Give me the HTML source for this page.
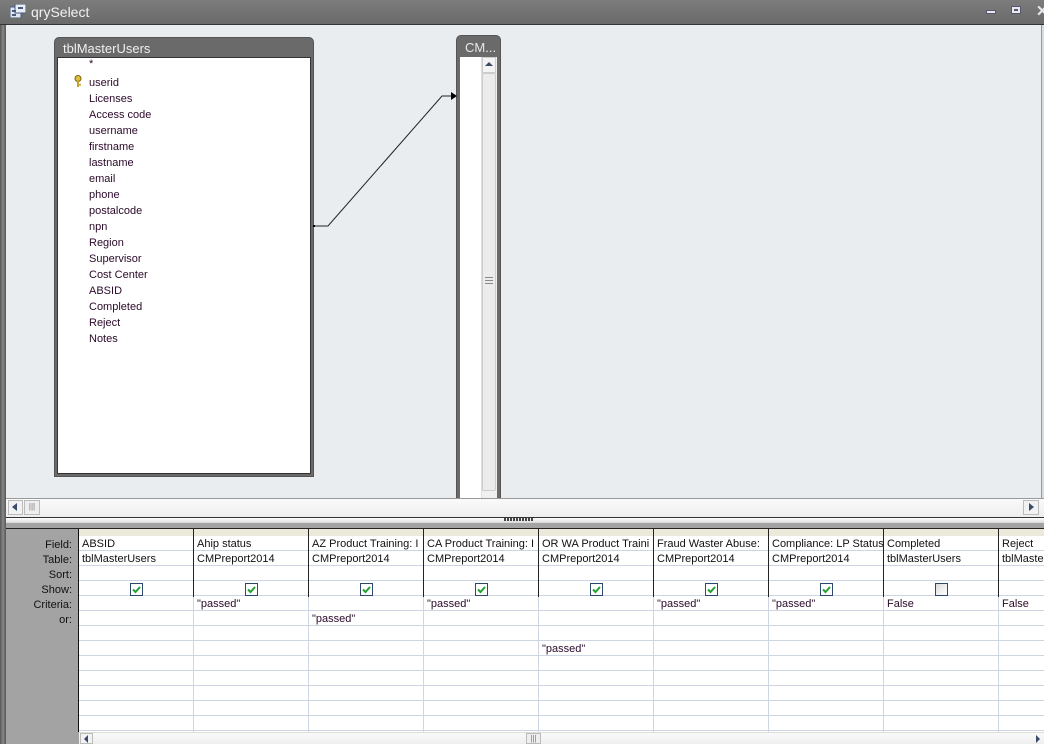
<!DOCTYPE html>
<html><head><meta charset="utf-8"><style>
*{margin:0;padding:0;box-sizing:border-box}
body{width:1044px;height:744px;overflow:hidden;position:relative;background:#e9edf0;font-family:"Liberation Sans",sans-serif;font-size:11px}
.a{position:absolute}
.t{color:#2a0a2a;white-space:nowrap;overflow:hidden}
</style></head><body>
<div class="a" style="left:0;top:0;width:1044px;height:25px;background:linear-gradient(#7c7c7c,#6a6a6a);border-bottom:1px solid #333"></div>
<svg class="a" style="left:10px;top:4px" width="16" height="14"><rect x="0" y="3" width="11" height="11" fill="#dfe6f0" stroke="#4a5a7a"/><rect x="5" y="0" width="11" height="9" fill="#e8eef6" stroke="#4a5a7a"/><rect x="2" y="6" width="4" height="2" fill="#4a5a7a"/><rect x="2" y="10" width="4" height="2" fill="#4a5a7a"/><rect x="8" y="3" width="5" height="2" fill="#4a5a7a"/></svg>
<div class="a" style="left:31px;top:4px;color:#f2f2f2;font-size:14px">qrySelect</div>
<div class="a" style="left:986px;top:10px;width:10px;height:4px;background:#e8e8ee;border:1px solid #555870"></div>
<div class="a" style="left:1011px;top:6px;width:10px;height:8px;background:#e8e8ee;border:1px solid #555870"><div style="margin:2px;height:2px;background:#555870"></div></div>
<div class="a" style="left:1036px;top:2px;color:#e8e8ee;font-size:15px;font-weight:bold">✕</div>
<div class="a" style="left:0;top:25px;width:6px;height:719px;background:linear-gradient(90deg,#555,#888,#555)"></div>
<div class="a" style="left:1041px;top:25px;width:3px;height:473px;background:#d8dce0;border-left:1px solid #999"></div>

<div class="a" style="left:54px;top:37px;width:260px;height:440px;background:#6a6a6a;border:1px solid #555;border-radius:5px 5px 0 0"></div>
<div class="a" style="left:63px;top:41px;color:#f0f0f0;font-size:13px">tblMasterUsers</div>
<div class="a" style="left:57px;top:57px;width:254px;height:417px;background:#fff;border:1px solid #333"></div>
<div class="a t" style="left:89px;top:58px">*</div>
<svg class="a" style="left:74px;top:75px" width="8" height="12"><circle cx="4" cy="3.5" r="3" fill="#e0c040" stroke="#7a6010"/><rect x="3" y="6" width="2" height="6" fill="#c9a020"/><rect x="5" y="9" width="2" height="1.5" fill="#c9a020"/></svg>
<div class="a" style="left:89px;top:75px;line-height:16px;color:#2a0a2a">userid<br>Licenses<br>Access code<br>username<br>firstname<br>lastname<br>email<br>phone<br>postalcode<br>npn<br>Region<br>Supervisor<br>Cost Center<br>ABSID<br>Completed<br>Reject<br>Notes</div>

<div class="a" style="left:456px;top:35px;width:45px;height:470px;background:#6a6a6a;border:1px solid #555;border-radius:5px 5px 0 0"></div>
<div class="a" style="left:465px;top:40px;color:#e8e8e8;font-size:13px">CM...</div>
<div class="a" style="left:460px;top:57px;width:37px;height:441px;background:#fff"></div>
<div class="a" style="left:481px;top:57px;width:16px;height:441px;background:#f0f0f0;border-left:1px solid #ddd"></div>
<div class="a" style="left:482px;top:57px;width:14px;height:16px;background:#f4f4f4;border:1px solid #ccc"></div>
<div class="a" style="left:485px;top:62px;border-left:4px solid transparent;border-right:4px solid transparent;border-bottom:4px solid #3a4a6a"></div>
<div class="a" style="left:482px;top:73px;width:14px;height:418px;background:#ececec;border:1px solid #ccc;border-radius:2px"></div>
<div class="a" style="left:485px;top:277px;width:8px;height:7px;border-top:1px solid #888;border-bottom:1px solid #888"><div style="margin-top:2px;height:1px;background:#888"></div></div>

<svg class="a" style="left:310px;top:85px" width="150" height="150"><polyline points="4,141 18,141 132,11 144,11" fill="none" stroke="#222" stroke-width="1"/><polygon points="141,7 147,11 141,15" fill="#000"/><rect x="3" y="140" width="2" height="2" fill="#000"/></svg>

<div class="a" style="left:6px;top:498px;width:1038px;height:19px;background:linear-gradient(#fafafa,#eeeeee);border-top:1px solid #999"></div>
<div class="a" style="left:8px;top:500px;width:15px;height:15px;background:#f2f2f2;border:1px solid #bbb"></div>
<div class="a" style="left:12px;top:503px;border-top:4px solid transparent;border-bottom:4px solid transparent;border-right:5px solid #3a4a6a"></div>
<div class="a" style="left:24px;top:500px;width:16px;height:15px;background:#eee;border:1px solid #bbb;font-size:8px;color:#777;text-align:center;line-height:12px">|||</div>
<div class="a" style="left:1023px;top:500px;width:16px;height:15px;background:#f2f2f2;border:1px solid #bbb"></div>
<div class="a" style="left:1029px;top:503px;border-top:4px solid transparent;border-bottom:4px solid transparent;border-left:5px solid #3a4a6a"></div>
<div class="a" style="left:6px;top:517px;width:1038px;height:6px;background:linear-gradient(#fff,#d8d8d8);border-top:1px solid #333"></div>
<div class="a" style="left:504px;top:518px;width:30px;height:3px;background:repeating-linear-gradient(90deg,#444 0 2px,transparent 2px 3px)"></div>

<div class="a" style="left:6px;top:523px;width:1038px;height:221px;background:#a3a3a3"></div>
<div class="a" style="left:6px;top:528px;width:1038px;height:1px;background:#222"></div>
<div class="a" style="left:78px;top:529px;width:966px;height:203px;background:#fff;border-left:1px solid #111"></div>
<div class="a" style="left:79px;top:529px;width:965px;height:7px;background:#ebe9da"></div>
<div class="a" style="left:79px;top:536px;width:965px;height:196px;background:repeating-linear-gradient(#fff 0 14px,#cdd5e2 14px 15px)"></div>
<div class="a" style="left:8px;top:538px;width:64px;text-align:right;line-height:15px;color:#111">Field:<br>Table:<br>Sort:<br>Show:<br>Criteria:<br>or:</div>
<div id="cols"></div>
<script>
var xs=[78,193,308,423,538,653,768,883,998];
var f=["ABSID","Ahip status","AZ Product Training: I","CA Product Training: I","OR WA Product Traini","Fraud Waster Abuse:","Compliance: LP Status","Completed","Reject"];
var tb=["tblMasterUsers","CMPreport2014","CMPreport2014","CMPreport2014","CMPreport2014","CMPreport2014","CMPreport2014","tblMasterUsers","tblMasterUsers"];
var cr=["",'"passed"',"",'"passed"',"",'"passed"','"passed"',"False","False"];
var h="";
for(var i=0;i<9;i++){var x=xs[i];
if(i>0){h+='<div class="a" style="left:'+x+'px;top:529px;width:1px;height:68px;background:#222"></div>';
h+='<div class="a" style="left:'+x+'px;top:597px;width:1px;height:135px;background:#cdd5e2"></div>';}
h+='<div class="a t" style="left:'+(x+4)+'px;top:538px;width:111px;color:#111">'+f[i]+'</div>';
h+='<div class="a t" style="left:'+(x+4)+'px;top:553px;width:'+(i==8?42:111)+'px;color:#111">'+tb[i]+'</div>';
if(i<8){var c=i==7;h+='<div class="a" style="left:'+(x+52)+'px;top:583px;width:13px;height:13px;border:1px solid #2c4a6c;background:'+(c?'linear-gradient(135deg,#ddd,#fff)':'#fff')+'">'+(c?'':'<svg width="11" height="11" style="display:block"><polyline points="2,5.5 4.5,8 9,3" fill="none" stroke="#22a030" stroke-width="2"/></svg>')+'</div>';}
if(cr[i])h+='<div class="a t" style="left:'+(x+4)+'px;top:598px">'+cr[i]+'</div>';
}
h+='<div class="a t" style="left:312px;top:613px">"passed"</div>';
h+='<div class="a t" style="left:542px;top:643px">"passed"</div>';
document.getElementById("cols").innerHTML=h;
</script>
<div class="a" style="left:79px;top:732px;width:965px;height:12px;background:linear-gradient(#fafafa,#eee);border-top:1px solid #ddd"></div>
<div class="a" style="left:80px;top:733px;width:13px;height:11px;background:#f2f2f2;border:1px solid #bbb"></div>
<div class="a" style="left:84px;top:735px;border-top:4px solid transparent;border-bottom:4px solid transparent;border-right:4px solid #3a4a6a"></div>
<div class="a" style="left:526px;top:733px;width:15px;height:11px;background:#eee;border:1px solid #bbb;font-size:8px;color:#777;text-align:center;line-height:10px">|||</div>
<div class="a" style="left:1036px;top:735px;border-top:4px solid transparent;border-bottom:4px solid transparent;border-left:4px solid #3a4a6a"></div>
</body></html>
